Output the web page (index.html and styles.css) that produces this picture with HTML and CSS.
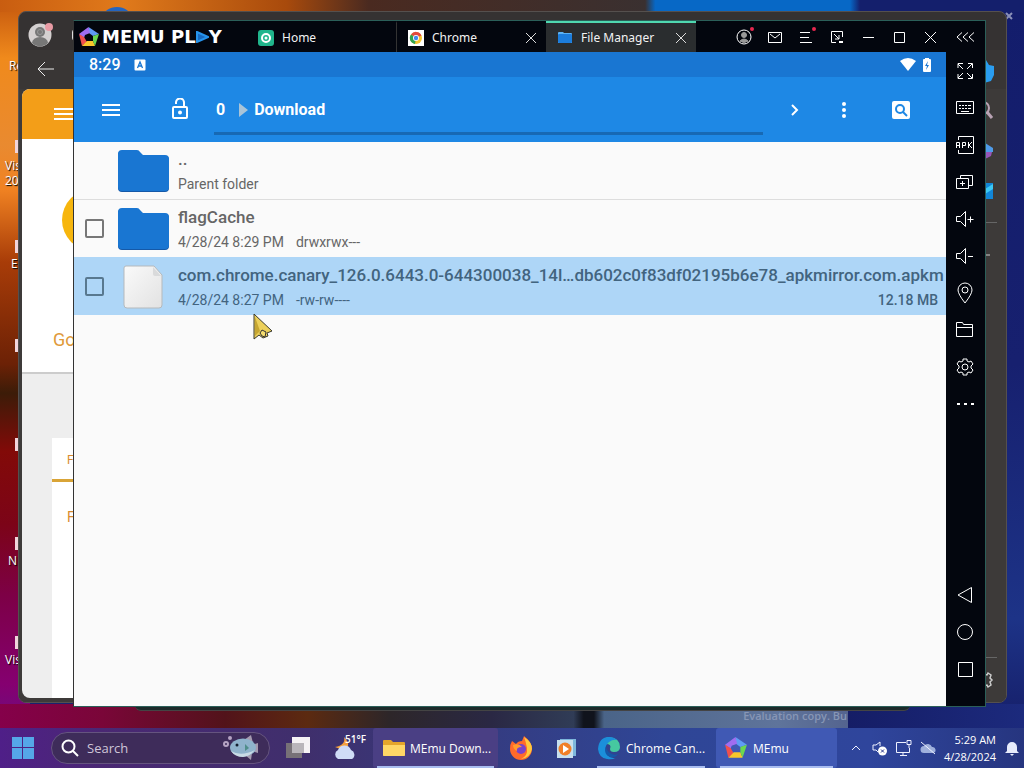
FILE: index.html
```html
<!DOCTYPE html>
<html lang="en">
<head>
  <meta charset="UTF-8">
  <meta name="viewport" content="width=device-width, initial-scale=1.0">
  <title>Desktop - MEmu</title>
  <link rel="stylesheet" href="styles.css">
</head>
<body>
  <main class="desktop">
    <!-- Desktop shortcuts -->
    <div class="shortcut shortcut-recycle">Re</div>
    <div class="shortcut shortcut-studio">Vis<br>20</div>
    <div class="shortcut shortcut-e">E</div>
    <div class="shortcut shortcut-n">N</div>
    <div class="shortcut shortcut-vis">Vis</div>
    <div class="icon-scrap scrap-1"></div>
    <div class="icon-scrap scrap-2"></div>
    <div class="icon-scrap scrap-3"></div>
    <div class="icon-scrap scrap-4"></div>
    <div class="icon-scrap scrap-5"></div>
    <div class="icon-scrap scrap-6"></div>
    <div class="blue-dot"></div>
    <div class="watermark">Evaluation copy. Bu</div>
    <svg class="stray-close" viewBox="0 0 8 8"><path d="M1 1l6 6M7 1L1 7"/></svg>

    <div class="hidden-window"></div>

    <!-- Browser window -->
    <section class="browser">
      <div class="browser-top">
        <svg class="profile" viewBox="0 0 26 26">
          <circle cx="12" cy="13" r="11.500" fill="#d4d0d0"/>
          <circle cx="12" cy="10" r="5" fill="#777"/>
          <circle cx="12" cy="10" r="2.500" fill="none" stroke="#999"/>
          <path d="M4 21a8 6 0 0 1 16 0 11.500 11.500 0 0 1-16 0z" fill="#777"/>
          <circle cx="21" cy="5" r="4" fill="#e89aa4"/>
        </svg>
        <div class="tab-stub"></div>
      </div>
      <div class="browser-nav">
        <svg class="back" viewBox="0 0 18 16"><path d="M8 1L1 8l7 7M1 8h16"/></svg>
      </div>
      <div class="browser-body">
        <div class="page">
          <div class="page-header">
            <svg class="page-menu" viewBox="0 0 24 14"><path d="M0 2h24M0 7h24M0 12h24"/></svg>
          </div>
          <div class="page-hero">
            <div class="hero-icon"></div>
            <div class="hero-title">Google</div>
          </div>
          <div class="page-card">
            <div class="card-tab">F</div>
            <div class="card-text">F</div>
          </div>
        </div>
        <div class="edge-bar">
          <svg viewBox="0 0 24 24"><path d="M13 1l3 5 5 1v9l-3 6-7 2-5-4 5-4z" fill="#2a9df0"/></svg>
          <svg viewBox="0 0 24 24"><circle cx="10" cy="9" r="6" fill="none" stroke="#b9a3b4" stroke-width="2"/><path d="M14 13l5 6" stroke="#b9a3b4" stroke-width="3"/></svg>
          <svg viewBox="0 0 24 24"><path d="M12 4l8 5v4h-8z" fill="#4f9bea"/><path d="M12 13h7l-1 4-6 3z" fill="#9656b8"/></svg>
          <svg viewBox="0 0 24 24"><path d="M3 4h17v16H3z" fill="#1186d8"/><path d="M12 10l8-5v5l-8 5z" fill="#3cc8f4"/></svg>
          <hr>
          <svg class="edge-minus" viewBox="0 0 24 24"><path d="M6 12h11" stroke="#ccc"/></svg>
          <hr class="edge-last">
          <svg viewBox="0 0 24 24"><path d="M10 6l4 1 1-2 3 2-1 3 2 2-2 2 1 3-3 2-1-2-4 1" fill="none" stroke="#ccc" stroke-width="1.500"/></svg>
        </div>
      </div>
    </section>

    <!-- Emulator window -->
    <section class="memu">
      <header class="titlebar">
        <div class="brand">
          <svg class="brand-mark" viewBox="0 0 22 22">
            <path d="M10.500 1L21 8l-6 2-4-3z" fill="#5f9cf5"/>
            <path d="M10.500 1L1 8l5 4 1-3 5-2z" fill="#a06df0"/>
            <path d="M1 8l3 12 5-4-3-5z" fill="#f0504d"/>
            <path d="M4 20h13l-2-5H9z" fill="#f8c62c"/>
            <path d="M17 20l4-12-6 2v5z" fill="#6bd850"/>
          </svg>
          <div class="wordmark">MEMU PL<svg viewBox="0 0 13 12"><path d="M1 1l11 5L1 11z" fill="#1769c0" stroke="#2593ec" stroke-width="2"/></svg>Y</div>
        </div>
        <nav class="tabs">
          <a class="tab tab-home" href="#home">
            <svg viewBox="0 0 16 16"><rect width="16" height="16" rx="3" fill="#20b58c"/><circle cx="8" cy="8" r="4" fill="none" stroke="#fff" stroke-width="2"/><circle cx="8" cy="8" r="1.500" fill="#fff"/></svg>
            <span>Home</span>
          </a>
          <a class="tab" href="#chrome">
            <svg viewBox="0 0 16 16"><path fill="#fff" d="M0 0h16v16H0z"/><circle cx="8" cy="8" r="6" fill="#f4c430"/><path d="M8 8L3 4.500A6 6 0 0 1 13.500 5.500z" fill="#e2483d"/><path d="M8 8L3 4.500A6 6 0 0 0 7 14z" fill="#2fa350"/><circle cx="8" cy="8" r="3" fill="#fff"/><circle cx="8" cy="8" r="2.200" fill="#4389ee"/></svg>
            <span>Chrome</span>
            <svg class="tab-close" viewBox="0 0 12 12"><path d="M1 1l10 10M11 1L1 11"/></svg>
          </a>
          <a class="tab tab-active" href="#files">
            <svg viewBox="0 0 16 16"><path d="M1 3q0-1 1-1h4l1 1h7q1 0 1 1v9H1z" fill="#5bb2f4"/><rect x="1" y="4" width="14" height="9" rx="1" fill="#1c7ddc"/></svg>
            <span>File Manager</span>
            <svg class="tab-close" viewBox="0 0 12 12"><path d="M1 1l10 10M11 1L1 11"/></svg>
          </a>
        </nav>
        <div class="controls">
          <button aria-label="Account" class="has-dot"><svg viewBox="0 0 16 16"><circle cx="8" cy="8" r="7"/><circle cx="8" cy="6" r="2.500" fill="#999" stroke="#999"/><path d="M4 12q4-4 8 0-4 3-8 0z" fill="#999" stroke="#999"/></svg></button>
          <button aria-label="Mail"><svg viewBox="0 0 16 16"><path d="M1.500 3.500h13v10h-13zM3 5l5 4 5-4"/></svg></button>
          <button aria-label="Menu" class="has-dot"><svg viewBox="0 0 16 16"><path d="M2 3.500h10M2 8.500h9M2 13.500h12"/></svg></button>
          <button aria-label="Small window"><svg viewBox="0 0 16 16"><path d="M7 13.500H2.500v-11h11V8M5 5l5 5M10 6v4H6"/><path d="M10 13h4" stroke-width="2"/></svg></button>
          <button aria-label="Minimize"><svg viewBox="0 0 16 16"><path d="M3 8.500h11"/></svg></button>
          <button aria-label="Maximize"><svg viewBox="0 0 16 16"><path d="M3.500 3.500h10v10h-10z"/></svg></button>
          <button aria-label="Close"><svg viewBox="0 0 16 16"><path d="M3 3l11 11M14 3L3 14"/></svg></button>
          <button aria-label="Collapse" class="collapse"><svg viewBox="0 0 18 16"><path d="M6 3.500L1 8l5 4.500M12 3.500L7 8l5 4.500M18 3.500L13 8l5 4.500"/></svg></button>
        </div>
      </header>

      <div class="android">
        <div class="statusbar">
          <span>8:29</span>
          <svg class="status-a" viewBox="0 0 12 12"><rect width="11" height="11" x=".5" y=".5" rx="1" fill="#fff"/><path d="M3.500 9L6 3l2.500 6M4.500 7h3" fill="none" stroke="#1976d2" stroke-width="1.300"/></svg>
          <svg class="wifi" viewBox="0 0 16 13"><path d="M0 3q8-6 16 0L8 13z"/></svg>
          <svg class="battery" viewBox="0 0 8 14"><path d="M2 1V0h4v1h1q1 0 1 1v11q0 1-1 1H1q-1 0-1-1V2q0-1 1-1z" fill="#fff"/><path d="M5 3L2 8h2l-1 4 3-5H4z" fill="#1976d2"/></svg>
        </div>
        <div class="appbar">
          <button aria-label="Navigation" class="app-menu"><svg viewBox="0 0 24 24"><path d="M3 7h18M3 12h18M3 17h18" stroke-width="2"/></svg></button>
          <div class="path">
            <button aria-label="Storage lock"><svg viewBox="0 0 24 24"><rect x="5" y="9" width="14" height="11" rx="1"/><path d="M16 9V5a4 4 0 0 0-8-1v2"/><circle cx="12" cy="14.500" r="2" fill="#fff" stroke="none"/></svg></button>
            <div class="crumbs">
              <a href="#root">0</a>
              <svg viewBox="0 0 9 14"><path d="M0 0l9 7-9 7z" fill="#a9c4d8"/></svg>
              <a href="#download">Download</a>
            </div>
          </div>
          <button aria-label="Next"><svg viewBox="0 0 24 24"><path d="M10 7l5 5-5 5"/></svg></button>
          <button aria-label="More"><svg viewBox="0 0 24 24" class="solid"><circle cx="12" cy="6" r="2"/><circle cx="12" cy="12" r="2"/><circle cx="12" cy="18" r="2"/></svg></button>
          <button aria-label="Search" class="app-search"><svg viewBox="0 0 24 24" class="solid"><rect x="3" y="3" width="18" height="18" rx="2"/><circle cx="11" cy="11" r="4" class="lens"/><path d="M14 14l4 4" class="lens"/></svg></button>
        </div>

        <ul class="files">
          <li class="file">
            <span class="check"></span>
            <svg class="folder" viewBox="0 0 52 44"><path d="M1 6q0-4 4-4h15q2 0 3 2l3 3h22q4 0 4 4v28q0 4-4 4H5q-4 0-4-4z" fill="#1559a8"/><path d="M1 5q0-4 4-4h15q2 0 3 2l3 3h22q4 0 4 4v28q0 4-4 4H5q-4 0-4-4z" fill="#1976d2"/></svg>
            <div class="info">
              <div class="name">..</div>
              <div class="meta"><span>Parent folder</span></div>
            </div>
          </li>
          <li class="file file-above">
            <span class="check"><input type="checkbox" aria-label="flagCache"></span>
            <svg class="folder" viewBox="0 0 52 44"><path d="M1 6q0-4 4-4h15q2 0 3 2l3 3h22q4 0 4 4v28q0 4-4 4H5q-4 0-4-4z" fill="#1559a8"/><path d="M1 5q0-4 4-4h15q2 0 3 2l3 3h22q4 0 4 4v28q0 4-4 4H5q-4 0-4-4z" fill="#1976d2"/></svg>
            <div class="info">
              <div class="name">flagCache</div>
              <div class="meta"><span>4/28/24 8:29 PM</span><span>drwxrwx---</span></div>
            </div>
          </li>
          <li class="file file-selected">
            <span class="check"><input type="checkbox" aria-label="com.chrome.canary"></span>
            <svg class="folder" viewBox="0 0 52 44"><defs><linearGradient id="sheet" x2="1" y2="1"><stop stop-color="#fafafa"/><stop offset="1" stop-color="#e2e2e2"/></linearGradient></defs><path d="M9 1h28l8 9v30q0 3-3 3H10q-3 0-3-3V3q0-2 2-2z" fill="url(#sheet)" stroke="#b5b9bc"/><path d="M36 2l8 9h-6q-2 0-2-2z" fill="#d9dadb"/></svg>
            <div class="info">
              <div class="name">com.chrome.canary_126.0.6443.0-644300038_14l…db602c0f83df02195b6e78_apkmirror.com.apkm</div>
              <div class="meta"><span>4/28/24 8:27 PM</span><span>-rw-rw----</span><b>12.18 MB</b></div>
            </div>
          </li>
        </ul>
      </div>

      <aside class="tools">
        <button aria-label="Full screen"><svg viewBox="0 0 18 18"><path d="M2 6V1.500h5M2 2l5 5M12 1.500h4.500V6M16 2l-5 5M2 12v4.500h5M2 16l5-5M16.500 12v4.500H12M16 16l-5-5"/></svg></button>
        <button aria-label="Keyboard"><svg viewBox="0 0 18 18"><path d="M.5 2.500h17v12H.5zM3 6.500h12M3 9.500h12"/><path d="M5 12.500h8"/><path d="M5.500 5v6M8.500 5v6M11.500 5v6" stroke="#03060e"/></svg></button>
        <button aria-label="Install APK"><svg viewBox="0 0 18 18"><path d="M2.500 4V.5h15v17h-15V14M.5 12V6.500h3V12M.5 9.500h3M6.500 12V6.500h3v3h-3M12.500 6v6M16 6l-3 3 3 3"/></svg></button>
        <button aria-label="Multi instance"><svg viewBox="0 0 18 18"><path d="M.5 5.500h12v10H.5zM4.500 5V2.500h12v10H13M6.500 8v5M4 10.500h5"/></svg></button>
        <button aria-label="Volume up"><svg viewBox="0 0 18 18"><path d="M.5 6.500h4l5-5v15l-5-5h-4zM11.500 9.500h6M14.500 6.500v6"/></svg></button>
        <button aria-label="Volume down"><svg viewBox="0 0 18 18"><path d="M.5 6.500h4l5-5v15l-5-5h-4zM12 9.500h5"/></svg></button>
        <button aria-label="Location"><svg viewBox="0 0 18 22"><path d="M9 21Q2 12 2 8a7 7 0 0 1 14 0q0 4-7 13z"/><circle cx="9" cy="8" r="3"/></svg></button>
        <button aria-label="Shared folder"><svg viewBox="0 0 18 18"><path d="M.5 15.500v-14h6l1 2h9v12zM.5 6.500h16"/></svg></button>
        <button aria-label="Settings"><svg viewBox="0 0 18 18"><path d="M7 3V1h4v2l2 1 2-1 2 3-2 2v2l2 2-2 3-2-1-2 1v2H7v-2l-2-1-2 1-2-3 2-2V8L1 6l2-3 2 1z"/><circle cx="9" cy="9" r="3"/></svg></button>
        <button aria-label="More tools"><svg viewBox="0 0 18 18"><path d="M1 9h3M8 9h3M15 9h3" stroke-width="2"/></svg></button>
        <button aria-label="Back" class="tools-back"><svg viewBox="0 0 18 18"><path d="M15.500 1.500v15L2 9z"/></svg></button>
        <button aria-label="Home"><svg viewBox="0 0 18 18"><circle cx="9" cy="9" r="7.500"/></svg></button>
        <button aria-label="Recents"><svg viewBox="0 0 18 18"><path d="M2.500 2.500h14v14h-14z"/></svg></button>
      </aside>
    </section>

    <svg class="cursor" viewBox="0 0 20 27"><path d="M1 1v25l5-4 4 3 5-2-1-3 5-2z" fill="#ecd05a" stroke="#3a3a30"/><path d="M2 4v19l5-5z" fill="#c6a632"/><path d="M7 20l2-3 4 2-1 5-3-1z" fill="#f4dc70" stroke="#333"/></svg>
  </main>

  <footer class="taskbar">
    <button class="start" aria-label="Start"><svg viewBox="0 0 22 22"><path d="M0 0h10v10H0zM11 0h11v10H11zM0 11h10v11H0zM11 11h11v11H11z" fill="#55a7e8"/></svg></button>
    <label class="search">
      <svg viewBox="0 0 18 18"><circle cx="7.500" cy="7.500" r="6"/><path d="M12 12l5 5"/></svg>
      <input type="search" placeholder="Search" aria-label="Search">
      <svg class="fish" viewBox="0 0 36 26"><circle cx="3" cy="9" r="2" fill="none" stroke="#b6a4c4"/><circle cx="7" cy="3" r="1" fill="none" stroke="#b6a4c4"/><path d="M21 5l7-5 2 8zM22 20l6 5 1-7zM29 10l6-2v10l-6-2z" fill="#a59bb0"/><ellipse cx="20" cy="12.500" rx="13" ry="9" fill="#8fb3cc"/><path d="M8 16q10 6 24-1-6 7-12 7-8 0-12-6z" fill="#c9dbe6"/><circle cx="14" cy="10" r="1.500" fill="#142030"/><path d="M22 9l4 4-4 3z" fill="#4f8e8a"/></svg>
    </label>
    <button class="task-view" aria-label="Task view"><svg viewBox="0 0 24 24"><path d="M6 1h18v16H6z" fill="#f5f2f4"/><path d="M0 7h16v15H0z" fill="#777177"/><path d="M6 7h12v10H6z" fill="#b9b5ba"/></svg></button>
    <button class="weather" aria-label="Weather"><svg viewBox="0 0 26 24"><path d="M12 1q2 8-9 10 8 4 13-1 1-4-4-9z" fill="#f5a03c"/><path d="M6 23a5 5 0 0 1 0-9 7 7 0 0 1 13 0 5 5 0 0 1 1 9z" fill="#cfdcf6"/></svg><span>51°F</span></button>
    <button class="task task-files"><svg viewBox="0 0 22 18"><path d="M0 2q0-1 1-1h7l2 2h11q1 0 1 1v12q0 1-1 1H1q-1 0-1-1z" fill="#e5a52b"/><path d="M0 6h22v10q0 1-1 1H1q-1 0-1-1z" fill="#ffd766"/></svg><span>MEmu Down...</span></button>
    <button class="pin" aria-label="Firefox"><svg viewBox="0 0 24 24"><path d="M3 5l4 3q2-3 6-3l2-5q8 6 8 13a11 11 0 0 1-22 0q0-5 2-8z" fill="#ff6a2b"/><path d="M15 1q8 5 8 12-2 9-11 10 7-3 6-11-1-6-3-11z" fill="#ffc93e"/><circle cx="12" cy="13" r="5" fill="#7a43c8"/><path d="M4 9q6-2 9 2-6 0-5 4-4-2-4-6z" fill="#ff9b2d"/></svg></button>
    <button class="pin" aria-label="Media player"><svg viewBox="0 0 24 24"><path d="M6 3h16v17H6z" fill="#7db7dc"/><path d="M3 4h16v18H3z" fill="#c7dfee"/><circle cx="11" cy="13" r="6.500" fill="#f07f28"/><path d="M9 9l6 4-6 4z" fill="#fff"/></svg></button>
    <button class="task task-edge"><svg viewBox="0 0 24 24"><path d="M12 1q11 1 11 10 0 5-6 5-4 0-4-3 2-5-4-5-6 0-7 7 0-13 10-14z" fill="#46c8a0"/><path d="M1 13Q2 1 12 1q5 0 8 3-4-1-8 2-6 5-2 13 4 4 9 3-4 2-9 1-8-1-9-10z" fill="#1b8fdb"/><path d="M9 10q-3 8 4 11 5 1 8-3-4 2-8-1-4-3-4-7z" fill="#1557a8"/></svg><span>Chrome Can...</span></button>
    <button class="task task-memu"><svg viewBox="0 0 22 22"><path d="M10.500 1L21 8l-6 2-4-3z" fill="#5f9cf5"/><path d="M10.500 1L1 8l5 4 1-3 5-2z" fill="#a06df0"/><path d="M1 8l3 12 5-4-3-5z" fill="#f0504d"/><path d="M4 20h13l-2-5H9z" fill="#f8c62c"/><path d="M17 20l4-12-6 2v5z" fill="#6bd850"/></svg><span>MEmu</span></button>
    <div class="tray">
      <svg viewBox="0 0 16 16"><path d="M4 10l4-4 4 4"/></svg>
      <svg viewBox="0 0 16 16"><path d="M8 2L4 5H1v5h3l2 2M8 2v4"/><circle cx="10.500" cy="11" r="4.500" fill="#fff" stroke="none"/><path d="M9 9.500l3 3M12 9.500l-3 3" stroke="#27348a"/></svg>
      <svg viewBox="0 0 16 16"><path d="M10 2.500H.5v10h13V8M4 15.500h7M7 13v2M11 .5h4v4h-4zM13 5v3"/></svg>
      <svg viewBox="0 0 16 16"><path d="M4 13a3.500 3.500 0 0 1 0-7 4.500 4.500 0 0 1 8 1 3 3 0 0 1 1 6z" fill="#9fb0dc" stroke="none"/><path d="M1 2l14 12"/></svg>
      <div class="clock">5:29 AM<br>4/28/2024</div>
      <svg viewBox="0 0 16 16"><path d="M3 11V7a5 5 0 0 1 10 0v4l2 2H1zM6 14h4l-2 2z" fill="#e6ebfb" stroke="none"/></svg>
    </div>
  </footer>
</body>
</html>
```

FILE: styles.css
```css
* {
  margin: 0;
  padding: 0;
  box-sizing: border-box;
}

body {
  height: 100vh;
  display: flex;
  flex-direction: column;
  overflow: hidden;
  font-family: "Open Sans", "Noto Sans", sans-serif;
  font-size: 12px;
}

button {
  border: none;
  background: none;
  color: inherit;
  font: inherit;
  display: flex;
  align-items: center;
  justify-content: center;
}

a {
  color: inherit;
  text-decoration: none;
}

svg {
  flex-shrink: 0;
  display: block;
}

/* Desktop */
.desktop {
  flex: 1;
  position: relative;
  overflow: hidden;
  background:
    linear-gradient(90deg, #85004a 0%, #7a0638 10%, #52131a 22%, #5c2a10 30%, #2d2629 38%, #2a2844 48%, #303c56 56%, #10131c 57%, #10131c 58%, #4a6488 59%, #5f749b 76%, #54648f 82.800%, #151d66 82.800%, #1c2a7d 100%) bottom / 100% 24px no-repeat,
    linear-gradient(90deg, #c95d10 0%, #e07a1b 12%, #a84a0c 28%, #4a2a20 36%, #3a3030 63%, #0768c6 64%, #0768c6 83%, #141f6c 84%) top / 100% 12px no-repeat,
    linear-gradient(180deg, #c4570e 0%, #f08a1c 8%, #e98a30 20%, #f08222 26%, #a83c08 36%, #6c2106 50%, #3c1c08 54%, #820a08 62%, #7c0418 72%, #7d0047 82%, #850070 94%, #6b0e80 100%) left / 30px 100% no-repeat,
    linear-gradient(180deg, #131d6c 0%, #17206f 50%, #1d3387 85%, #161e68 100%);
}

.shortcut {
  position: absolute;
  color: #fff;
  font-size: 12px;
  line-height: 15px;
  text-shadow: 1px 1px 1px #000;
}

.shortcut-recycle { left: 9px; top: 58px; }
.shortcut-studio { left: 5px; top: 158px; }
.shortcut-e { left: 11px; top: 256px; }
.shortcut-n { left: 8px; top: 553px; }
.shortcut-vis { left: 5px; top: 652px; }

.icon-scrap {
  position: absolute;
  left: 15px;
  width: 6px;
  height: 13px;
  background: #f1d5dc;
}

.scrap-1 { top: 140px; }
.scrap-2 { top: 240px; }
.scrap-3 { top: 339px; }
.scrap-4 { top: 438px; }
.scrap-5 { top: 537px; }
.scrap-6 { top: 636px; }

.blue-dot {
  position: absolute;
  left: 103px;
  top: 7px;
  width: 28px;
  height: 20px;
  border-radius: 50%;
  background: #2465c0;
}

.watermark {
  position: absolute;
  right: 177px;
  bottom: 4px;
  line-height: 16px;
  font-size: 11px;
  font-weight: 600;
  color: #8796b5;
}

.stray-close {
  position: absolute;
  right: 11px;
  top: 12px;
  width: 8px;
  stroke: #8a90b8;
  stroke-width: 2;
}

.hidden-window {
  position: absolute;
  left: 135px;
  right: 114px;
  bottom: 17px;
  height: 100px;
  border-radius: 6px;
  background: #1c2a2a;
  border-bottom: 1px solid #444;
}

/* Browser behind the emulator */
.browser {
  position: absolute;
  left: 18px;
  right: 17px;
  top: 11px;
  bottom: 25px;
  display: flex;
  flex-direction: column;
  background: #353232;
  border: 1px solid #55504e;
  border-radius: 8px;
  overflow: hidden;
}

.browser-top {
  height: 38px;
  display: flex;
  align-items: center;
  gap: 18px;
  padding: 8px 0 0 9px;
}

.profile {
  width: 26px;
}

.tab-stub {
  width: 20px;
  height: 12px;
  border: 1px solid #ddd;
  border-radius: 3px;
}

.browser-nav {
  height: 39px;
  padding: 11px 18px;
  background: #393635;
}

.back {
  width: 18px;
  fill: none;
  stroke: #eee;
}

.browser-body {
  flex: 1;
  display: flex;
  padding: 0 0 4px 3px;
  background: #3d3a39;
}

.page {
  flex: 1;
  display: flex;
  flex-direction: column;
  background: #eee;
  border-radius: 8px;
  overflow: hidden;
}

.page-header {
  height: 50px;
  padding: 18px 32px;
  background: #f39e18;
}

.page-menu {
  width: 24px;
  stroke: #fff;
  stroke-width: 2;
}

.page-hero {
  height: 235px;
  padding: 50px 31px;
  background: #fff;
  border-bottom: 2px solid #ccc;
  font-family: Roboto, sans-serif;
}

.hero-icon {
  width: 62px;
  height: 62px;
  margin-left: 9px;
  border-radius: 50%;
  background: #f7b60d;
}

.hero-title {
  margin-top: 79px;
  font-size: 18px;
  line-height: 20px;
  color: #e09a3a;
}

.page-card {
  flex: 1;
  margin: 64px 30px 0;
  background: #fff;
  font-family: Roboto, sans-serif;
  color: #d98c2e;
}

.card-tab {
  height: 44px;
  padding: 15px;
  border-bottom: 3px solid #d9a437;
  font-size: 12px;
}

.card-text {
  padding: 27px 15px;
  font-size: 14px;
}

.edge-bar {
  width: 38px;
  padding: 0 9px 0 5px;
  display: flex;
  flex-direction: column;
  gap: 16px;
  margin-top: -30px;
}

.edge-bar svg {
  width: 24px;
  height: 24px;
}

.edge-bar hr {
  border: none;
  border-top: 1px solid #666;
  margin-top: 3px;
}

.edge-bar .edge-minus {
  margin-top: 4px;
}

.edge-bar .edge-last {
  margin-top: auto;
  margin-bottom: -6px;
}

.edge-bar svg:last-child {
  margin-bottom: 6px;
}

/* Emulator window */
.memu {
  position: absolute;
  left: 73px;
  right: 38px;
  top: 20px;
  bottom: 21px;
  display: grid;
  grid-template-columns: 1fr 39px;
  grid-template-rows: 31px 1fr;
  background: #03060e;
  border: 1px solid #2b5f59;
  border-left-color: #333;
}

.titlebar {
  grid-column: 1 / 3;
  display: flex;
  color: #f2f2f2;
}

.brand {
  width: 173px;
  padding-left: 4px;
  display: flex;
  align-items: center;
  gap: 2px;
}

.brand-mark {
  width: 22px;
}

.wordmark {
  font-family: "DejaVu Sans", sans-serif;
  font-weight: bold;
  font-size: 18px;
  line-height: 20px;
  white-space: nowrap;
  color: #fff;
}

.wordmark svg {
  display: inline-block;
  width: 13px;
}

.tabs {
  flex: 1;
  display: flex;
}

.tab {
  width: 149px;
  display: flex;
  align-items: center;
  gap: 8px;
  padding: 0 9px 0 11px;
  border-top: 2px solid transparent;
  font-family: "Noto Sans", sans-serif;
}

.tab svg {
  width: 16px;
}

.tab .tab-close {
  width: 12px;
  margin-left: auto;
  stroke: #ddd;
}

.tab-home {
  border-right: 1px solid #333;
  width: 150px;
}

.tab-active {
  background: #2a2d2f;
  border-top-color: #4fd8b0;
  width: 150px;
}

.controls {
  display: flex;
}

.controls button {
  width: 31px;
  position: relative;
}

.controls svg {
  width: 16px;
  fill: none;
  stroke: #fff;
}

.controls .collapse {
  width: 40px;
}

.controls .collapse svg {
  width: 18px;
}

.has-dot::after {
  content: "";
  position: absolute;
  right: 5px;
  top: 6px;
  width: 4px;
  height: 4px;
  border-radius: 50%;
  background: #e8274f;
}

/* Android screen */
.android {
  background: #fafafa;
  font-family: Roboto, sans-serif;
  min-width: 0;
}

.statusbar {
  height: 25px;
  display: flex;
  align-items: center;
  padding: 0 15px;
  background: #1976d2;
  color: #fff;
  font-size: 16px;
  font-weight: 500;
}

.status-a {
  width: 12px;
  margin-left: 13px;
}

.wifi {
  width: 16px;
  margin-left: auto;
  fill: #fff;
}

.battery {
  width: 8px;
  margin-left: 7px;
}

.appbar {
  height: 65px;
  display: flex;
  align-items: stretch;
  padding-right: 13px;
  background: #1e88e5;
  color: #fff;
}

.appbar button {
  width: 50px;
}

.appbar .app-menu {
  width: 73px;
}

.appbar .app-search {
  width: 64px;
}

.appbar svg {
  width: 24px;
  fill: none;
  stroke: #fff;
  stroke-width: 2;
}

.appbar svg.solid {
  fill: #fff;
  stroke: none;
}

.appbar svg .lens {
  fill: none;
  stroke: #1e88e5;
  stroke-width: 2;
}

.path {
  flex: 1;
  display: flex;
  padding-left: 8px;
}

.crumbs {
  flex: 1;
  display: flex;
  align-items: center;
  gap: 6px;
  margin: 0 6px 7px 9px;
  padding: 10px 0 0 2px;
  border-bottom: 3px solid #1769b4;
  font-size: 16px;
  font-weight: 700;
}

.crumbs svg {
  width: 9px;
  height: 14px;
  margin-left: 8px;
  stroke: none;
}

.files {
  list-style: none;
}

.file {
  height: 58px;
  display: flex;
  align-items: center;
  padding-right: 8px;
  border-bottom: 1px solid #ddd;
  color: #666;
}

.check {
  width: 43px;
  display: flex;
  padding-left: 11px;
}

.check input {
  appearance: none;
  width: 19px;
  height: 19px;
  border: 2px solid #777;
  border-radius: 2px;
}

.folder {
  width: 52px;
  height: 44px;
}

.info {
  flex: 1;
  min-width: 0;
  padding: 3px 0 0 9px;
}

.name {
  font-size: 17px;
  font-weight: 500;
  line-height: 24px;
  white-space: nowrap;
}

.meta {
  display: flex;
  gap: 12px;
  font-size: 14px;
  line-height: 26px;
}

.meta b {
  margin-left: auto;
  font-weight: 500;
}

.file-above {
  border-color: #aed6f7;
}

.file-selected {
  height: 57px;
  background: #aed6f7;
  border: none;
  color: #42647f;
}

.file-selected input {
  border-color: #58788f;
}

.tools {
  display: flex;
  flex-direction: column;
  padding: 0 1px 19px 0;
}

.tools button {
  height: 37px;
}

.tools svg {
  width: 18px;
  fill: none;
  stroke: #fff;
}

.tools .tools-back {
  margin-top: auto;
}

.cursor {
  position: absolute;
  left: 253px;
  top: 313px;
  width: 20px;
}

/* Taskbar */
.taskbar {
  height: 40px;
  display: flex;
  align-items: center;
  padding-left: 12px;
  color: #fff;
  background: linear-gradient(90deg, #4f1f88 0%, #4a2873 10%, #3f2f6c 30%, #353a7e 45%, #2f4696 65%, #2f459c 85%, #26357f 100%);
}

.start svg {
  width: 22px;
}

.search {
  width: 219px;
  height: 32px;
  margin-left: 17px;
  padding: 0 10px 0 9px;
  display: flex;
  align-items: center;
  gap: 8px;
  border: 1px solid #65547f;
  border-radius: 16px;
  background: #3e2c5a;
}

.search svg {
  width: 18px;
  fill: none;
  stroke: #fff;
  stroke-width: 2;
}

.search .fish {
  width: 36px;
  stroke: none;
}

.search input {
  flex: 1;
  min-width: 0;
  border: none;
  outline: none;
  background: none;
  color: #fff;
  font: inherit;
  font-size: 13px;
}

.search input::placeholder {
  color: #cfc6d8;
}

.task-view {
  margin-left: 16px;
}

.task-view svg {
  width: 24px;
}

.weather {
  position: relative;
  width: 34px;
  margin-left: 22px;
  justify-content: flex-start;
}

.weather svg {
  width: 26px;
}

.weather span {
  position: absolute;
  right: 0;
  top: -4px;
  font-size: 10px;
  font-weight: 600;
  line-height: 14px;
}

.task {
  height: 40px;
  gap: 5px;
  padding: 0 8px;
  justify-content: flex-start;
  border-radius: 3px;
  position: relative;
  white-space: nowrap;
}

.task svg {
  width: 24px;
}

.task::after {
  content: "";
  position: absolute;
  left: 4px;
  right: 4px;
  bottom: 0;
  height: 2px;
  background: #a9bdf0;
}

.task-files {
  width: 125px;
  padding-left: 10px;
  margin-left: 7px;
  background: #4a3f84;
}

.task-files svg {
  width: 22px;
}

.pin {
  margin-left: 11px;
}

.pin + .pin {
  margin-left: 21px;
}

.pin svg {
  width: 24px;
}

.task-edge {
  width: 118px;
  padding-left: 4px;
  margin-left: 15px;
}

.task-edge::after {
  left: 4px;
  right: 6px;
}

.task-memu {
  width: 121px;
  margin-left: 5px;
  background: #4059b4;
}

.tray {
  flex: 1;
  display: flex;
  align-items: center;
  justify-content: flex-end;
  gap: 8px;
  padding-right: 4px;
}

.tray svg {
  width: 16px;
  fill: none;
  stroke: #eef1ff;
}

.clock {
  text-align: right;
  font-size: 11px;
  line-height: 17px;
}
```
